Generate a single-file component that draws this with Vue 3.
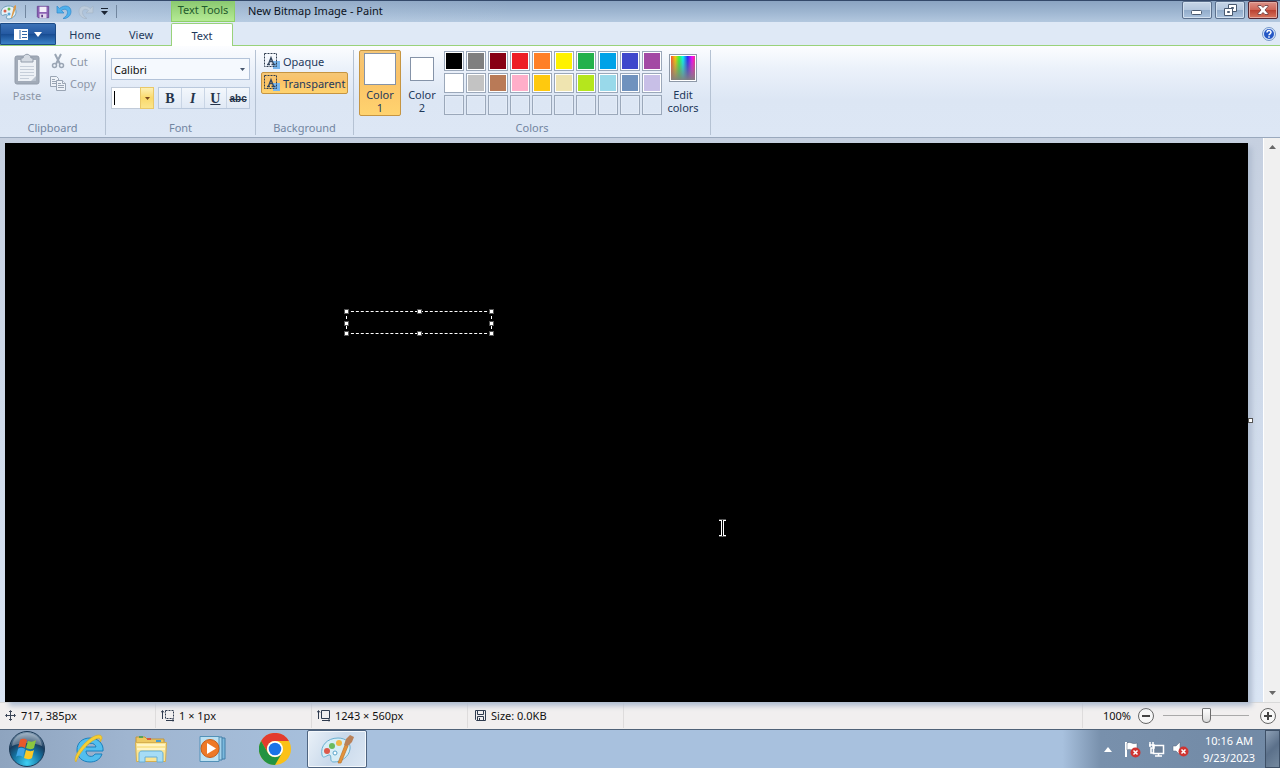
<template>
  <div class="paint">
    <header class="title-bar">
      <div class="quick-access">
        <svg class="app-icon" width="18" height="18" viewBox="0 0 18 18">
          <path d="M1 10C1 5 5 3 9 3s7 2 7 6-4 7-8 7c-2 0-2-2-1-3s-1-2-3-1-3 0-3-2z" fill="#e4f1f8" stroke="#6ea0bd" />
          <circle cx="5" cy="8" r="1.5" fill="#d9604c" />
          <circle cx="9" cy="6" r="1.5" fill="#6bbb4e" />
          <circle cx="9" cy="11" r="1.5" fill="#57a7d8" />
          <path d="M11 15l3-12 2-1v3l-4 10z" fill="#d99a4e" />
        </svg>
        <span class="divider"></span>
        <button aria-label="Save">
          <svg width="14" height="14" viewBox="0 0 16 16">
            <path d="M1.500 1.500h13v13h-12l-1-1z" fill="#8d62b5" stroke="#6a4591" />
            <path d="M4 2h8v6H4z" fill="#f3eefa" />
            <path d="M4 10h8v5H4z" fill="#e0d5ec" />
            <path d="M6 11h2v3H6z" fill="#5b3c85" />
          </svg>
        </button>
        <button aria-label="Undo">
          <svg width="16" height="16" viewBox="0 0 16 16">
            <path d="M1 2v7h7L5.500 6.500C9 4 11.500 5.500 11.500 8.500c0 2-1.500 4-4.500 6h2c4-1 6-4 6-7C15 2 9 0 3.500 4.500z" fill="#4fb1ec" stroke="#2f86cb" stroke-width=".7" />
          </svg>
        </button>
        <button aria-label="Redo">
          <svg width="16" height="16" viewBox="0 0 16 16">
            <path d="M15 2v7H8l2.500-2.500C7 4 4.500 5.500 4.500 8.500c0 2 1.500 4 4.500 6H7c-4-1-6-4-6-7C1 2 7 0 12.500 4.500z" fill="#bccbdb" stroke="#a3b4c7" stroke-width=".7" />
          </svg>
        </button>
        <button aria-label="Customize Quick Access Toolbar">
          <svg width="9" height="9" viewBox="0 0 9 9">
            <path d="M1 1h7v1H1zM1 4h7L4.500 8z" fill="#1b2432" />
          </svg>
        </button>
        <span class="divider"></span>
      </div>
      <div class="context-title">Text Tools</div>
      <h1>New Bitmap Image - Paint</h1>
      <div class="window-buttons">
        <button aria-label="Minimize">
          <svg width="12" height="12" viewBox="0 0 12 12"><rect x=".5" y="6.500" width="10" height="4" rx="1" fill="#fff" stroke="#4a5a70" /></svg>
        </button>
        <button aria-label="Restore">
          <svg width="13" height="12" viewBox="0 0 13 12">
            <path d="M4.500.5h8v7h-8z" fill="#fff" stroke="#4a5a70" />
            <path d="M7.500 3.500h2v1h-2z" fill="#9db2cb" stroke="#4a5a70" />
            <path d="M.5 4.500h8v7h-8z" fill="#fff" stroke="#4a5a70" />
            <path d="M3.500 7.500h2v1h-2z" fill="#9db2cb" stroke="#4a5a70" />
          </svg>
        </button>
        <button class="close" aria-label="Close">
          <svg width="12" height="10" viewBox="0 0 12 10"><path d="M1 .5h3l2 2 2-2h3v1L8 5l3 3.500v1H8l-2-2-2 2H1v-1L4 5 1 1.500z" fill="#fff" stroke="#63363a" stroke-width=".8" /></svg>
        </button>
      </div>
    </header>

    <nav class="tabs">
      <button class="file-tab" aria-label="Paint menu">
        <svg width="14" height="11" viewBox="0 0 14 11">
          <path d="M0 0h14v11H0z" fill="#fff" />
          <path d="M6 1v9M8 2.500h5M8 5.500h5M8 8.500h5" stroke="#3368a8" />
        </svg>
        <svg width="8" height="5" viewBox="0 0 8 5"><path d="M0 0h8L4 5z" fill="#fff" /></svg>
      </button>
      <button
        v-for="tab in tabs"
        :key="tab"
        class="tab"
        :class="{ active: tab === activeTab }"
        @click="activeTab = tab"
      >{{ tab }}</button>
      <button class="help" aria-label="Help">
        <svg width="14" height="14" viewBox="0 0 14 14">
          <circle cx="7" cy="7" r="6.500" fill="#dce9fa" stroke="#7697c8" />
          <circle cx="7" cy="7" r="5" fill="#2457c5" />
          <path d="M5 5.500C5 3 9 3 9 5.300 9 6.800 7 6.800 7 8.300M7 9.300v1.500" fill="none" stroke="#fff" stroke-width="1.500" />
        </svg>
      </button>
    </nav>

    <section class="ribbon">
      <div class="group clipboard">
        <div class="group-body">
          <button class="paste" disabled>
            <svg width="26" height="32" viewBox="0 0 26 32">
              <rect x="1" y="3" width="24" height="28" rx="2" fill="#a2abb8" stroke="#939dab" />
              <path d="M4 7h18v21H4z" fill="#edf1f6" />
              <path d="M7 5h2c1-5 7-5 8 0h2v4H7z" fill="#d5dbe3" stroke="#939dab" />
              <path d="M6 13.500h14M6 16.500h14M6 19.500h14M6 22.500h14M6 25.500h9" stroke="#c6ced9" />
              <path d="M17 28l5-5v5z" fill="#b9c2ce" />
            </svg>
            <span>Paste</span>
          </button>
          <div class="small-actions">
            <button disabled>
              <svg width="16" height="16" viewBox="0 0 16 16" fill="none" stroke="#9aa5b4">
                <path d="M5 1l5 10M11 1L6 11" stroke-width="2" />
                <circle cx="4.500" cy="12.500" r="2" stroke-width="1.500" />
                <circle cx="11.500" cy="12.500" r="2" stroke-width="1.500" />
              </svg>
              Cut
            </button>
            <button disabled>
              <svg width="16" height="16" viewBox="0 0 16 16" fill="#eef2f8" stroke="#9aa5b4">
                <path d="M.5 1.500h6l2 2v8h-8z" />
                <path d="M2 4.500h3M2 6.500h4M2 8.500h4" />
                <path d="M6.500 5.500h6l3 3v7h-9z" />
                <path d="M12.500 5.500v3h3M8 8.500h3M8 10.500h6M8 12.500h6" />
              </svg>
              Copy
            </button>
          </div>
        </div>
        <div class="group-label">Clipboard</div>
      </div>

      <div class="group font">
        <div class="group-body">
          <div class="font-name">
            <select v-model="fontName" aria-label="Font family">
              <option>Calibri</option>
            </select>
            <svg width="5" height="3" viewBox="0 0 5 3"><path d="M0 0h5L2.500 3z" fill="#47576e" /></svg>
          </div>
          <div class="font-row">
            <div class="font-size">
              <input v-model="fontSize" type="text" aria-label="Font size" />
              <span class="caret"></span>
              <button aria-label="Font size list">
                <svg width="5" height="3" viewBox="0 0 5 3"><path d="M0 0h5L2.500 3z" fill="#7a4a1e" /></svg>
              </button>
            </div>
            <div class="styles">
              <button class="bold" aria-label="Bold">B</button>
              <button class="italic" aria-label="Italic">I</button>
              <button class="underline" aria-label="Underline">U</button>
              <button class="strike" aria-label="Strikethrough">abc</button>
            </div>
          </div>
        </div>
        <div class="group-label">Font</div>
      </div>

      <div class="group background">
        <div class="group-body">
          <button
            v-for="mode in modes"
            :key="mode"
            class="mode"
            :class="{ active: mode === activeMode }"
            @click="activeMode = mode"
          >
            <svg width="16" height="16" viewBox="0 0 16 16">
              <path d="M9 8h7v8H9z" fill="#78b7ee" />
              <path d="M.5.5h12v13H.5z" fill="none" stroke="#2f3c4e" stroke-dasharray="2 1" />
              <path d="M3 11.500h3M7.500 11.500h4M4.500 11L7 4.500l2.500 6.500M5.500 8.500h3" fill="none" stroke="#34465e" stroke-width="1.300" />
            </svg>
            {{ mode }}
          </button>
        </div>
        <div class="group-label">Background</div>
      </div>

      <div class="group colors">
        <div class="group-body">
          <button class="color-slot active">
            <span class="slot-swatch large"></span>
            <span>Color<br />1</span>
          </button>
          <button class="color-slot">
            <span class="slot-swatch"></span>
            <span>Color<br />2</span>
          </button>
          <div class="palette">
            <button
              v-for="(color, i) in palette"
              :key="i"
              class="swatch"
              :class="{ empty: !color }"
              :style="{ backgroundColor: color }"
              :aria-label="color || 'Empty color'"
            ></button>
          </div>
          <button class="edit-colors">
            <span class="rainbow"></span>
            <span>Edit<br />colors</span>
          </button>
        </div>
        <div class="group-label">Colors</div>
      </div>
    </section>

    <main class="workspace">
      <div class="sheet-area">
        <div class="sheet">
          <div class="text-box">
            <i v-for="handle in handles" :key="handle" class="handle" :class="handle"></i>
          </div>
          <svg class="cursor" width="9" height="18" viewBox="0 0 9 18">
            <path d="M1 1.500h3M5 1.500h3M1 16.500h3M5 16.500h3M3.500 2v14M5.500 2v14" stroke="#fff" />
            <path d="M1 0h7M1 18h7" stroke="#aaa" />
          </svg>
          <i class="resize-handle"></i>
        </div>
      </div>
      <div class="scrollbar">
        <button aria-label="Scroll up"><svg width="7" height="4" viewBox="0 0 7 4"><path d="M0 4h7L3.500 0z" fill="#686868" /></svg></button>
        <button aria-label="Scroll down"><svg width="7" height="4" viewBox="0 0 7 4"><path d="M0 0h7L3.500 4z" fill="#686868" /></svg></button>
      </div>
    </main>

    <footer class="status-bar">
      <div class="status-cell">
        <svg width="11" height="11" viewBox="0 0 11 11">
          <path d="M5.500 1v9M1 5.500h9" stroke="#3a4557" />
          <path d="M4 2l1.500-1.500L7 2M4 9l1.500 1.500L7 9M2 4L.5 5.500 2 7M9 4l1.500 1.500L9 7" fill="none" stroke="#3a4557" />
        </svg>
        717, 385px
      </div>
      <div class="status-cell">
        <svg width="13" height="12" viewBox="0 0 13 12" fill="none" stroke="#2f3b4e">
          <path d="M1.500 1v8M0 2.500l1.500-2 1.500 2M5 10.500h8M11 8.500l2 2-1 1" />
          <path d="M4.500.5h8v8h-8z" stroke-dasharray="2 1" />
        </svg>
        1 × 1px
      </div>
      <div class="status-cell">
        <svg width="13" height="12" viewBox="0 0 13 12" fill="none" stroke="#2f3b4e">
          <path d="M1.500 1v8M0 2.500l1.500-2 1.500 2M5 10.500h8M11 8.500l2 2-1 1M4.500.5h8v8h-8z" />
        </svg>
        1243 × 560px
      </div>
      <div class="status-cell disk">
        <svg width="11" height="11" viewBox="0 0 11 11" fill="none" stroke="#2f3b4e">
          <path d="M.5.5h10v10h-9l-1-1zM2.500.5v4h6v-4M2.500 10.500v-4h6v4M4.500 8v2" />
        </svg>
        Size: 0.0KB
      </div>
      <div class="zoom">
        <span>100%</span>
        <button aria-label="Zoom out">
          <svg width="16" height="16" viewBox="0 0 16 16"><circle cx="8" cy="8" r="7.500" fill="#f7f7f7" stroke="#666" /><path d="M4 8h8" stroke="#444" stroke-width="2" /></svg>
        </button>
        <input v-model="zoom" type="range" min="0" max="100" aria-label="Zoom" />
        <button aria-label="Zoom in">
          <svg width="16" height="16" viewBox="0 0 16 16"><circle cx="8" cy="8" r="7.500" fill="#f7f7f7" stroke="#666" /><path d="M4 8h8M8 4v8" stroke="#444" stroke-width="2" /></svg>
        </button>
      </div>
    </footer>

    <div class="taskbar">
      <button class="start" aria-label="Start">
        <svg width="38" height="38" viewBox="0 0 38 38">
          <defs>
            <radialGradient id="orb" cx=".5" cy=".9" r=".9">
              <stop offset="0" stop-color="#3fd0f4" />
              <stop offset=".45" stop-color="#14719f" />
              <stop offset=".7" stop-color="#183c5e" />
              <stop offset="1" stop-color="#8da6bd" />
            </radialGradient>
          </defs>
          <circle cx="19" cy="19" r="17.500" fill="url(#orb)" stroke="#1c3a57" />
          <path d="M4 16C5 6 14 3 19 3s14 3 15 13c-9-4-21-4-30 0z" fill="#fff" opacity=".3" />
          <path d="M12 10c3-2 5-1 7 0l-2 8c-2-1-5-2-7 0z" fill="#e9582b" />
          <path d="M20 11c3 1 5 1 8-1l-2 8c-3 2-5 1-8 0z" fill="#8cc63f" />
          <path d="M10 19c2-2 5-1 7 0l-2 8c-2-1-5-2-7 0z" fill="#3fa4e6" />
          <path d="M18 20c3 1 5 2 8 0l-2 8c-3 2-5 1-8 0z" fill="#fbc926" />
        </svg>
      </button>
      <button class="task" aria-label="Internet Explorer">
        <svg width="32" height="32" viewBox="0 0 32 32">
          <path d="M30 18H13c0 6 7 7 9 3h7c-2 6-7 8-12 8C9 29 4 24 4 17S9 5 17 5c8 0 14 6 13 13zm-7-4c-1-5-9-5-10 0z" fill="#52beee" stroke="#1a80bd" />
          <path d="M3 29C-1 26 8 12 18 5c6-4 11-4 11 0 0 1-1 3-2 4 1-3 0-5-4-3C14 10 5 22 3 29z" fill="#f6cf35" stroke="#d8a91c" stroke-width=".6" />
        </svg>
      </button>
      <button class="task" aria-label="Windows Explorer">
        <svg width="34" height="32" viewBox="0 0 34 32">
          <path d="M2 4h9l2 2h17v5H2z" fill="#edc961" stroke="#bf9541" />
          <path d="M5 3h4v2H5z" fill="#56a35b" />
          <path d="M13 5h4v2h-4z" fill="#d65a40" />
          <path d="M22 7h5v2h-5z" fill="#4a9ed0" />
          <path d="M1.500 9.500h31l-1 19h-29z" fill="#fae594" stroke="#d6af50" />
          <path d="M3 12h28M3 16h28" stroke="#fff4c4" stroke-width="2" />
          <path d="M5 29v-8c0-2 1-3 3-3h18c2 0 3 1 3 3v8h-6v-5H11v5z" fill="#a6dcf5" stroke="#66aed6" />
        </svg>
      </button>
      <button class="task" aria-label="Windows Media Player">
        <svg width="30" height="28" viewBox="0 0 30 28">
          <path d="M8 3h19v21H8z" fill="#7bb9dd" stroke="#437fa8" />
          <path d="M5 2h19v23H5z" fill="#a4d2ea" stroke="#437fa8" />
          <path d="M2 1.500h19v25H2z" fill="#bce1f2" stroke="#5291b8" />
          <circle cx="12" cy="13.500" r="9" fill="#ee7927" stroke="#c85c16" />
          <path d="M9 8l9 5.500L9 19z" fill="#fff" />
        </svg>
      </button>
      <button class="task" aria-label="Google Chrome">
        <svg width="32" height="32" viewBox="0 0 32 32">
          <circle cx="16" cy="16" r="16" fill="#fbc116" />
          <path d="M2.100 8A16 16 0 0 1 29.900 8H16a8 8 0 0 0-7 12z" fill="#e33b2e" />
          <path d="M2.100 8A16 16 0 0 0 16 32l7-12a8 8 0 0 1-14 0z" fill="#229342" />
          <circle cx="16" cy="16" r="8" fill="#fff" />
          <circle cx="16" cy="16" r="6.300" fill="#1a73e8" />
        </svg>
      </button>
      <button class="task running" aria-label="Paint">
        <svg width="34" height="32" viewBox="0 0 34 32">
          <path d="M2 22C0 13 7 5 18 5c8 0 13 5 12 11-1 8-9 13-16 13-5 0-2-5-4-7-2-1-7 5-8 0z" fill="#d6edf6" stroke="#6aafd0" />
          <circle cx="7" cy="18" r="3" fill="#dc594b" />
          <circle cx="12" cy="13" r="3" fill="#6aba5f" />
          <circle cx="19" cy="10" r="3" fill="#f3b746" />
          <circle cx="15" cy="20" r="2" fill="#fff" stroke="#59a5cb" />
          <path d="M18 30l7-18 3 1-7 17z" fill="#e3933b" stroke="#bd7227" stroke-width=".7" />
          <path d="M24 12l2-6 4-4 4 2-2 5-4 4z" fill="#b98159" />
        </svg>
      </button>
      <div class="tray">
        <button aria-label="Show hidden icons"><svg width="8" height="5" viewBox="0 0 8 5"><path d="M0 5h8L4 0z" fill="#fff" /></svg></button>
        <button aria-label="Action Center">
          <svg width="17" height="17" viewBox="0 0 17 17">
            <path d="M2 1v15" stroke="#fff" stroke-width="2" />
            <path d="M3 2c4-2 5 2 10 0v7c-5 2-6-2-10 0z" fill="#fff" stroke="#4b5b70" stroke-width=".5" />
            <circle cx="11.500" cy="11.500" r="5" fill="#cf3431" />
            <path d="M9.500 9.500l4 4M13.500 9.500l-4 4" stroke="#fff" stroke-width="1.500" />
          </svg>
        </button>
        <button aria-label="Network">
          <svg width="17" height="16" viewBox="0 0 17 16">
            <path d="M5.500 4.500h10v8h-10z" fill="#6d8199" stroke="#fff" stroke-width="1.500" />
            <path d="M7 15h7M10.500 13v2M2 1v5M5 1v5M1 4h5v3H3v5h2" fill="none" stroke="#fff" stroke-width="1.500" />
          </svg>
        </button>
        <button aria-label="Volume">
          <svg width="17" height="16" viewBox="0 0 17 16">
            <path d="M1 5h3l4-4v13l-4-4H1z" fill="#fff" stroke="#56677d" stroke-width=".5" />
            <circle cx="11.500" cy="10.500" r="5" fill="#cf3431" />
            <path d="M9.500 8.500l4 4M13.500 8.500l-4 4" stroke="#fff" stroke-width="1.500" />
          </svg>
        </button>
      </div>
      <div class="clock">
        <span>10:16 AM</span>
        <span>9/23/2023</span>
      </div>
      <button class="show-desktop" aria-label="Show desktop"></button>
    </div>
  </div>
</template>

<script setup>
import { ref } from 'vue'

const tabs = ['Home', 'View', 'Text']
const activeTab = ref('Text')

const modes = ['Opaque', 'Transparent']
const activeMode = ref('Transparent')

const fontName = ref('Calibri')
const fontSize = ref('')
const zoom = ref(50)

const palette = [
  '#000000', '#7f7f7f', '#880015', '#ed1c24', '#ff7f27', '#fff200', '#22b14c', '#00a2e8', '#3f48cc', '#a349a4',
  '#ffffff', '#c3c3c3', '#b97a57', '#ffaec9', '#ffc90e', '#efe4b0', '#b5e61d', '#99d9ea', '#7092be', '#c8bfe7',
  ...Array(10).fill(null)
]

const handles = ['nw', 'n', 'ne', 'w', 'e', 'sw', 's', 'se']
</script>

<style>
body {
  margin: 0;
}
</style>

<style scoped>
.paint,
.paint * {
  box-sizing: border-box;
}

.paint {
  display: flex;
  flex-direction: column;
  min-height: 100vh;
  font-family: "Noto Sans", "Open Sans", sans-serif;
  font-size: 11px;
  line-height: 13px;
  color: #1e395b;
}

button,
input,
select {
  font: inherit;
  color: inherit;
  margin: 0;
  padding: 0;
  border: 0;
  background: none;
}

svg {
  display: block;
  flex: none;
}

/* title bar */
.title-bar {
  display: flex;
  height: 22px;
  border-top: 1px solid #34496a;
  background: linear-gradient(90deg, rgba(195, 214, 235, 0.5), transparent 40%), linear-gradient(#8ba4c2, #9db5d0 50%, #b3c8df);
}

.quick-access {
  display: flex;
  align-items: center;
  width: 171px;
  gap: 6px;
}

.divider {
  width: 1px;
  height: 13px;
  margin: 0 4px 0 1px;
  background: #71869f;
}

.context-title {
  width: 64px;
  padding-top: 2px;
  border: 1px solid #8fd067;
  border-top: 0;
  background: linear-gradient(#8ac870, #b5eb95);
  text-align: center;
  color: #1f5a2c;
}

h1 {
  flex: 1;
  margin: 0;
  padding: 3px 13px;
  font-size: 11px;
  font-weight: 400;
  color: #0c131d;
}

.window-buttons {
  display: flex;
  gap: 3px;
  height: 18px;
  padding-right: 2px;
}

.window-buttons button {
  display: flex;
  align-items: center;
  justify-content: center;
  width: 30px;
  border: 1px solid #5b708d;
  border-radius: 2px;
  background: linear-gradient(#c7d6e7, #b3c6dd 50%, #91abc9 50%, #abc3de);
  box-shadow: inset 0 0 0 1px #d2e0ef;
}

.window-buttons .close {
  border-color: #542632;
  background: linear-gradient(#dc9288, #cd6355 50%, #b93f30 50%, #d8755d);
  box-shadow: inset 0 0 0 1px #e3aaa1;
}

/* tabs */
.tabs {
  display: flex;
  align-items: flex-end;
  height: 24px;
  border-bottom: 1px solid #99d27a;
  background: #dfe9f6;
}

.file-tab {
  display: flex;
  align-items: center;
  justify-content: center;
  gap: 6px;
  width: 56px;
  height: 22px;
  margin-right: 1px;
  border: 1px solid #1c4b86;
  border-radius: 0 2px 0 0;
  background: linear-gradient(#3b72b6, #2459a2 50%, #174b91 50%, #3c82c7);
}

.tab {
  width: 56px;
  height: 22px;
}

.tab.active {
  width: 62px;
  height: 23px;
  margin: 0 0 -1px 2px;
  border: 1px solid #99d27a;
  border-bottom: 0;
  border-radius: 2px 2px 0 0;
  background: #fff;
}

.help {
  margin: 0 4px 4px auto;
}

/* ribbon */
.ribbon {
  display: flex;
  height: 92px;
  padding: 4px 0 2px;
  border-bottom: 1px solid #9aa9bd;
  background: linear-gradient(#fcfdff, #ebf1fa 25%, #dce6f4 60%, #dde7f5);
}

.group {
  display: flex;
  flex-direction: column;
  justify-content: space-between;
  padding-bottom: 1px;
  border-right: 1px solid #b5c2d3;
}

.group-label {
  text-align: center;
  color: #7285a1;
}

.group-body {
  display: flex;
}

.clipboard {
  width: 106px;
}

.clipboard button {
  color: #8c96a6;
}

.paste {
  display: flex;
  flex-direction: column;
  align-items: center;
  gap: 4px;
  width: 50px;
  padding: 3px 0 0 4px;
}

.small-actions {
  display: flex;
  flex-direction: column;
}

.small-actions button {
  display: flex;
  align-items: center;
  gap: 4px;
  height: 22px;
}

.font {
  width: 150px;
}

.font .group-body {
  flex-direction: column;
  gap: 7px;
  padding: 8px 5px 0;
}

.font-name {
  display: flex;
  align-items: center;
  height: 22px;
  border: 1px solid #b3c3d9;
  background: #f5f9fe;
}

.font-name select {
  flex: 1;
  height: 20px;
  margin-right: -12px;
  padding-left: 2px;
  appearance: none;
  color: #111;
}

.font-name svg {
  margin-right: 4px;
  pointer-events: none;
}

.font-row {
  display: flex;
  justify-content: space-between;
}

.font-size {
  display: flex;
  align-items: center;
  width: 43px;
  height: 22px;
  border: 1px solid #c1cbd9;
  background: #fff;
}

.font-size input {
  width: 2px;
  height: 20px;
}

.caret {
  width: 1px;
  height: 14px;
  background: #000;
}

.font-size button {
  display: flex;
  align-items: center;
  justify-content: center;
  width: 14px;
  height: 22px;
  margin: 0 -1px 0 auto;
  border: 1px solid #e9c869;
  background: linear-gradient(#fdf0b4, #fad96b 50%, #fbe58c);
}

.styles {
  display: flex;
  width: 92px;
  height: 22px;
  border: 1px solid #b9c8dc;
  background: linear-gradient(#f3f7fc, #e0e9f5);
}

.styles button {
  flex: 1;
  border-right: 1px solid #c9d5e5;
  font-family: "Liberation Serif", serif;
  font-size: 14px;
  font-weight: 700;
  color: #25344b;
}

.styles button:last-child {
  border: 0;
}

.italic {
  font-style: italic;
}

.underline {
  text-decoration: underline;
}

.styles .strike {
  font-family: "Liberation Sans", sans-serif;
  font-size: 10px;
  text-decoration: line-through;
}

.background {
  width: 98px;
}

.background .group-body {
  flex-direction: column;
  padding: 0 5px;
}

.mode {
  display: flex;
  align-items: center;
  gap: 3px;
  height: 22px;
  padding-left: 2px;
  border: 1px solid transparent;
  border-radius: 2px;
  white-space: nowrap;
}

.mode.active,
.color-slot.active {
  border-color: #c69542;
  background: linear-gradient(#f5c777, #fac267 40%, #ffd36f);
}

.colors {
  width: 357px;
}

.colors .group-body {
  padding-left: 5px;
}

.color-slot,
.edit-colors {
  display: flex;
  flex-direction: column;
  align-items: center;
  justify-content: space-between;
  width: 42px;
  height: 66px;
  padding-bottom: 1px;
  border: 1px solid transparent;
  border-radius: 2px;
}

.slot-swatch {
  width: 24px;
  height: 24px;
  margin-top: 6px;
  border: 1px solid #8593a8;
  background: #fff;
}

.slot-swatch.large {
  width: 32px;
  height: 32px;
  margin-top: 2px;
}

.palette {
  display: grid;
  grid-template-columns: repeat(10, 20px);
  grid-auto-rows: 20px;
  gap: 2px;
  margin: 1px 0 0 1px;
}

.swatch {
  border: 1px solid #9ba8ba;
  box-shadow: inset 0 0 0 1px #fff;
}

.swatch.empty {
  box-shadow: inset 0 0 0 1px #e4ecf7;
}

.rainbow {
  width: 28px;
  height: 28px;
  margin-top: 3px;
  border: 1px solid #8e99a8;
  background: linear-gradient(transparent, #808080), linear-gradient(90deg, #f33, #fc0 20%, #3f3 35%, #0ff 50%, #22f 68%, #f0f 85%, #f36);
  box-shadow: inset 0 0 0 1px #fff;
}

/* drawing area */
.workspace {
  flex: 1;
  display: flex;
  min-height: 300px;
}

.sheet-area {
  flex: 1;
  display: flex;
  padding: 5px 15px 0 5px;
  background: linear-gradient(#c6d0e0, #d0dbeb 50%, #dae5f4);
}

.sheet {
  position: relative;
  flex: 1;
  background: #000;
  box-shadow: 4px 4px 5px #b1bed1;
}

.text-box {
  position: absolute;
  left: 341px;
  top: 168px;
  width: 146px;
  height: 23px;
  border: 1px dashed #fff;
}

.handle,
.resize-handle {
  position: absolute;
  width: 5px;
  height: 5px;
  border: 1px solid #555;
  background: #fff;
}

.nw,
.n,
.ne {
  top: -3px;
}

.sw,
.s,
.se {
  bottom: -3px;
}

.nw,
.w,
.sw {
  left: -3px;
}

.ne,
.e,
.se {
  right: -3px;
}

.n,
.s {
  left: 70px;
}

.w,
.e {
  top: 9px;
}

.cursor {
  position: absolute;
  left: 713px;
  top: 376px;
}

.resize-handle {
  right: -5px;
  bottom: 50%;
}

.scrollbar {
  display: flex;
  flex-direction: column;
  justify-content: space-between;
  width: 17px;
  border-left: 1px solid #fff;
  background: #f0f0f0;
}

.scrollbar button {
  display: flex;
  align-items: center;
  justify-content: center;
  height: 18px;
}

/* status bar */
.status-bar {
  display: flex;
  height: 27px;
  padding-bottom: 1px;
  border-top: 1px solid #d9d9d9;
  background: #f1efef;
  color: #111;
}

.status-cell {
  display: flex;
  align-items: center;
  gap: 5px;
  width: 156px;
  padding-left: 5px;
  border-right: 1px solid #dedcdc;
}

.status-cell.disk {
  padding-left: 7px;
}

.zoom {
  display: flex;
  align-items: center;
  gap: 7px;
  margin-left: auto;
  padding: 0 4px 0 20px;
  border-left: 1px solid #dedcdc;
}

.zoom input {
  width: 86px;
  height: 18px;
  margin: 0 4px 0 2px;
  appearance: none;
  background: linear-gradient(#a9a9a9, #a9a9a9) center / 100% 1px no-repeat;
}

.zoom input::-webkit-slider-thumb {
  appearance: none;
  width: 9px;
  height: 15px;
  border: 1px solid #6b6b6b;
  border-radius: 1px 1px 4px 4px;
  background: linear-gradient(#fff, #dadada);
}

/* taskbar */
.taskbar {
  display: flex;
  height: 39px;
  border-top: 1px solid #4f6278;
  background: linear-gradient(90deg, #8ea4bf, #9fb5d0 10%, #a8c1de 27%, #a8c1de 83%, #7890ac 86%, #7189a5);
}

.taskbar button {
  display: flex;
  align-items: center;
  justify-content: center;
}

.start {
  width: 54px;
}

.task {
  width: 60px;
  margin-left: 2px;
}

.task:nth-child(2) {
  margin-left: 5px;
}

.task.running {
  border: 1px solid #4e6480;
  border-radius: 2px;
  background: linear-gradient(120deg, #eaf1f8, #c9d9eb 50%, #dce7f3);
  box-shadow: inset 0 0 0 1px #f4f8fc;
}

.tray {
  display: flex;
  align-items: center;
  gap: 7px;
  margin-left: auto;
}

.tray button:first-child {
  margin-right: 5px;
}

.clock {
  display: flex;
  flex-direction: column;
  justify-content: center;
  gap: 4px;
  width: 76px;
  padding-left: 4px;
  text-align: center;
  color: #fff;
}

.show-desktop {
  width: 15px;
  border: 1px solid #3e5067;
  background: linear-gradient(135deg, #8da0b6, #5b708a 50%, #74899f);
}
</style>
